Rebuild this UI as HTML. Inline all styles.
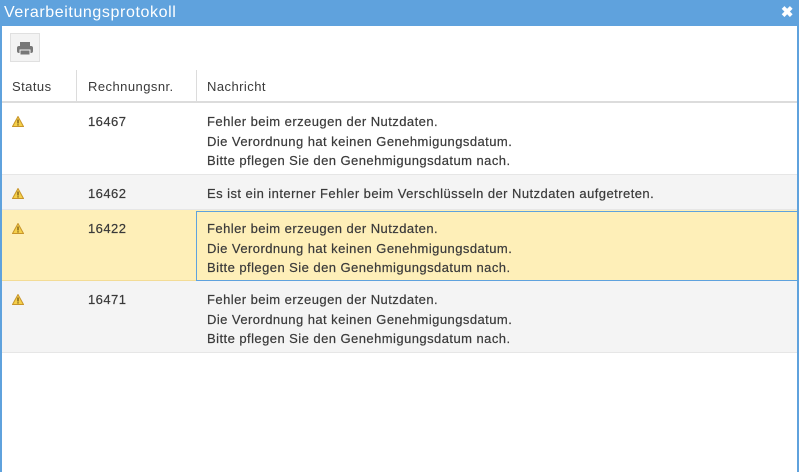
<!DOCTYPE html><html><head><style>
html,body{margin:0;width:799px;height:472px;overflow:hidden;background:#fff;font-family:"Liberation Sans",sans-serif;}
.win{position:absolute;left:0;top:0;width:795px;height:472px;border:2px solid #5fa2dd;border-top:0;border-bottom:0}
.title{position:absolute;left:0;top:0;width:799px;height:26px;background:#5fa2dd;color:#fff;font-size:16px;line-height:25px;letter-spacing:0.6px}
.title span{padding-left:4px}
.x{position:absolute;right:5px;top:0;font-size:15px;font-weight:bold}
.btn{position:absolute;left:10px;top:33px;width:30px;height:29px;background:#f3f3f3;border:1px solid #e0e0e0;box-sizing:border-box}
.row{position:absolute;left:2px;width:795px;font-size:13px;letter-spacing:0.45px;color:#3a3a3a;box-sizing:border-box;-webkit-text-stroke:0.2px #3a3a3a}
.row div{position:absolute;top:0;line-height:19.5px}
.c1{left:10px}.c2{left:86px}.c3{left:205px}
.hdr{top:70px;height:33px;border-bottom:2px solid #dcdcdc;-webkit-text-stroke:0}
.hdr div{top:7px!important}
.vl{position:absolute;top:70px;width:1px;height:32px;background:#dcdcdc}
.r{border-bottom:1px solid #e6e6e6}
.r div{top:9px!important}
.r div.c1{top:10px!important}
.tri{width:12px;height:11px}
</style></head><body>
<div class="win"></div>
<div class="title"><span>Verarbeitungsprotokoll</span><span class="x">✖</span></div>
<div class="btn"><svg width="28" height="27" viewBox="0 0 28 27"><rect x="9" y="8" width="10" height="4" fill="#777"/><rect x="6" y="12" width="16" height="7" rx="2" fill="#777"/><rect x="9" y="16" width="10" height="5" fill="#777" stroke="#f3f3f3" stroke-width="1"/></svg></div>
<div class="row hdr"><div class="c1">Status</div><div class="c2">Rechnungsnr.</div><div class="c3">Nachricht</div></div>
<div class="vl" style="left:76px"></div><div class="vl" style="left:196px"></div>
<div class="row r" style="top:103px;height:72px;background:#fff"><div class="c1"><svg class="tri" viewBox="0 0 12 11"><path d="M6 0.5L11.5 10.5H0.5Z" fill="#f5d04a" stroke="#c8952a"/><rect x="5.4" y="3.5" width="1.2" height="4" fill="#6a4a10"/><rect x="5.4" y="8.3" width="1.2" height="1.2" fill="#6a4a10"/></svg></div><div class="c2">16467</div><div class="c3">Fehler beim erzeugen der Nutzdaten.<br>Die Verordnung hat keinen Genehmigungsdatum.<br>Bitte pflegen Sie den Genehmigungsdatum nach.</div></div>
<div class="row r" style="top:175px;height:35px;background:#f4f4f4"><div class="c1"><svg class="tri" viewBox="0 0 12 11"><path d="M6 0.5L11.5 10.5H0.5Z" fill="#f5d04a" stroke="#c8952a"/><rect x="5.4" y="3.5" width="1.2" height="4" fill="#6a4a10"/><rect x="5.4" y="8.3" width="1.2" height="1.2" fill="#6a4a10"/></svg></div><div class="c2">16462</div><div class="c3">Es ist ein interner Fehler beim Verschlüsseln der Nutzdaten aufgetreten.</div></div>
<div class="row r" style="top:210px;height:71px;background:#feefb8;border-bottom-color:#f3dc96"><div class="c1"><svg class="tri" viewBox="0 0 12 11"><path d="M6 0.5L11.5 10.5H0.5Z" fill="#f5d04a" stroke="#c8952a"/><rect x="5.4" y="3.5" width="1.2" height="4" fill="#6a4a10"/><rect x="5.4" y="8.3" width="1.2" height="1.2" fill="#6a4a10"/></svg></div><div class="c2">16422</div><div class="c3">Fehler beim erzeugen der Nutzdaten.<br>Die Verordnung hat keinen Genehmigungsdatum.<br>Bitte pflegen Sie den Genehmigungsdatum nach.</div></div>
<div style="position:absolute;left:196px;top:211px;width:602px;height:70px;border:1px solid #5fa2dd;box-sizing:border-box"></div>
<div class="row r" style="top:281px;height:72px;background:#f4f4f4"><div class="c1"><svg class="tri" viewBox="0 0 12 11"><path d="M6 0.5L11.5 10.5H0.5Z" fill="#f5d04a" stroke="#c8952a"/><rect x="5.4" y="3.5" width="1.2" height="4" fill="#6a4a10"/><rect x="5.4" y="8.3" width="1.2" height="1.2" fill="#6a4a10"/></svg></div><div class="c2">16471</div><div class="c3">Fehler beim erzeugen der Nutzdaten.<br>Die Verordnung hat keinen Genehmigungsdatum.<br>Bitte pflegen Sie den Genehmigungsdatum nach.</div></div>
</body></html>
